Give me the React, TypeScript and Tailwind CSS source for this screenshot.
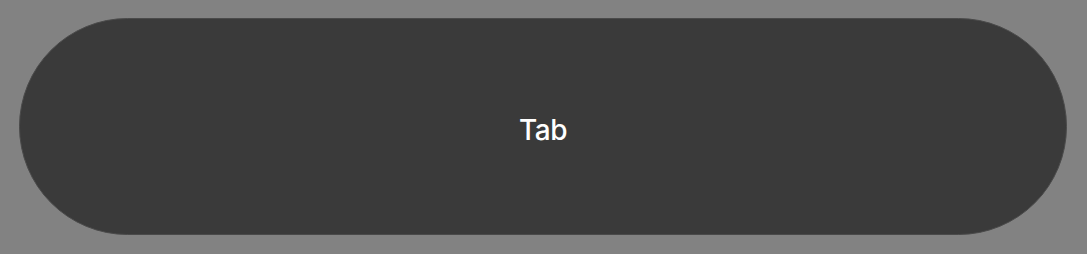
import React from "react";

const App = () => {
  return (
    <div className="w-[1087px] h-[254px] bg-[#828282] pl-[19px] pr-[20px] pt-[18px] pb-[19px]">
      <button className="w-full h-full rounded-full bg-[#3a3a3a] border border-[#4a4a4a] flex items-center justify-center pt-[6px] text-white text-[28px] font-medium font-['Inter','Liberation_Sans',sans-serif] tracking-[-0.5px]">
        Tab
      </button>
    </div>
  );
};

export default App;
